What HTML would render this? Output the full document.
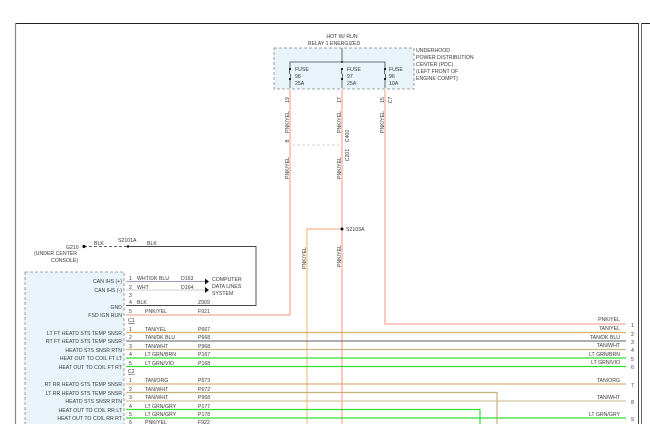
<!DOCTYPE html>
<html><head><style>
html,body{margin:0;padding:0;background:#fff;}
svg{display:block;font-family:"Liberation Sans",sans-serif;}
text{font-size:5.2px;fill:#3a3a3a;}
</style></head><body>
<svg width="650" height="424" viewBox="0 0 650 424" xmlns="http://www.w3.org/2000/svg">
<line x1="15" y1="23.5" x2="639" y2="23.5" stroke="#222" stroke-width="1"/>
<line x1="15.5" y1="23" x2="15.5" y2="424" stroke="#888" stroke-width="1.2"/>
<line x1="638.5" y1="23" x2="638.5" y2="424" stroke="#444" stroke-width="1"/>
<line x1="641.5" y1="23.5" x2="650" y2="23.5" stroke="#222" stroke-width="1"/>
<line x1="641.5" y1="23" x2="641.5" y2="424" stroke="#666" stroke-width="1"/>

<text x="342" y="38" text-anchor="middle">HOT W/ RUN</text>
<text x="334" y="45" text-anchor="middle">RELAY 1 ENERGIZED</text>
<rect x="274" y="48" width="140" height="41" fill="#e8f4fa" stroke="#888" stroke-dasharray="3,2" stroke-width="0.8"/>
<line x1="342" y1="48" x2="342" y2="62" stroke="#444" stroke-width="0.8"/>
<polyline points="290,70 290,62 385,62 385,70" fill="none" stroke="#444" stroke-width="0.8"/>
<circle cx="342" cy="62" r="1" fill="#222"/>
<g stroke="#333" stroke-width="0.7" fill="none">
<path d="M290,69 v1 q-1.5,2 0,4 q1.5,2 0,4 v10"/>
<path d="M342,69 v1 q-1.5,2 0,4 q1.5,2 0,4 v10"/>
<path d="M385,69 v1 q-1.5,2 0,4 q1.5,2 0,4 v10"/>
</g>
<g fill="#222"><rect x="289" y="68" width="2" height="2"/><rect x="289" y="78" width="2" height="2"/><rect x="341" y="68" width="2" height="2"/><rect x="341" y="78" width="2" height="2"/><rect x="384" y="68" width="2" height="2"/><rect x="384" y="78" width="2" height="2"/></g>
<text x="295" y="71">FUSE</text><text x="295" y="78">98</text><text x="295" y="85">25A</text>
<text x="347" y="71">FUSE</text><text x="347" y="78">97</text><text x="347" y="85">25A</text>
<text x="389" y="71">FUSE</text><text x="389" y="78">96</text><text x="389" y="85">10A</text>
<text x="416" y="52">UNDERHOOD</text>
<text x="416" y="59">POWER DISTRIBUTION</text>
<text x="416" y="66">CENTER (PDC)</text>
<text x="416" y="73">(LEFT FRONT OF</text>
<text x="416" y="80">ENGINE COMPT)</text>

<g fill="none" stroke="#f7ad9c" stroke-width="1.3">
<polyline points="290,90 290,315 126,315"/>
<polyline points="342,90 342,424"/>
<polyline points="385,90 385,324 626,324"/>
<polyline points="342,229 307,229 307,424" stroke="#f8b890"/>
</g>
<line x1="307" y1="230" x2="307" y2="424" stroke="#f5e48a" stroke-width="0.4"/>
<line x1="292" y1="145" x2="340" y2="145" stroke="#aaa" stroke-width="0.6" stroke-dasharray="3,2"/>
<circle cx="342" cy="229" r="1.5" fill="#111"/>
<text x="346" y="231">S2103A</text>
<g font-size="4.5">
<text transform="translate(289,100) rotate(-90)" text-anchor="middle">19</text>
<text transform="translate(341,100) rotate(-90)" text-anchor="middle">17</text>
<text transform="translate(384,100) rotate(-90)" text-anchor="middle">15</text>
<text transform="translate(392,100) rotate(-90)" text-anchor="middle">C7</text>
<text transform="translate(289,122) rotate(-90)" text-anchor="middle">PNK/YEL</text>
<text transform="translate(341,122) rotate(-90)" text-anchor="middle">PNK/YEL</text>
<text transform="translate(384,122) rotate(-90)" text-anchor="middle">PNK/YEL</text>
<text transform="translate(349,136) rotate(-90)" text-anchor="middle">C400</text>
<text transform="translate(349,155) rotate(-90)" text-anchor="middle">C201</text>
<text transform="translate(289,168) rotate(-90)" text-anchor="middle">PNK/YEL</text>
<text transform="translate(341,168) rotate(-90)" text-anchor="middle">PNK/YEL</text>
<text transform="translate(306,258) rotate(-90)" text-anchor="middle">PNK/YEL</text>
<text transform="translate(341,256) rotate(-90)" text-anchor="middle">PNK/YEL</text>
<text transform="translate(289,141) rotate(-90)" text-anchor="middle">8</text>
</g>

<line x1="84" y1="246.5" x2="128" y2="246.5" stroke="#333" stroke-width="0.8" stroke-dasharray="3,2"/>
<polyline points="128,246.5 256,246.5 256,305.5 126,305.5" fill="none" stroke="#444" stroke-width="0.9"/>
<circle cx="84" cy="246.5" r="1.6" fill="#111"/><circle cx="128" cy="246.5" r="1.2" fill="#111"/>
<text x="66" y="249">G210</text>
<text x="34" y="255">(UNDER CENTER</text>
<text x="51" y="262">CONSOLE)</text>
<text x="94" y="245">BLK</text><text x="118" y="242">S2101A</text><text x="147" y="245">BLK</text>

<rect x="25" y="272" width="99" height="160" fill="#e8f4fa" stroke="#888" stroke-dasharray="3,2" stroke-width="0.8"/>
<g text-anchor="end">
<text x="122" y="283">CAN IHS (+)</text>
<text x="122" y="292">CAN IHS (-)</text>
<text x="122" y="309">GND</text>
<text x="122" y="317">FSD IGN RUN</text>
<text x="122" y="335">LT FT HEATD STS TEMP SNSR</text>
<text x="122" y="343">RT FT HEATD STS TEMP SNSR</text>
<text x="122" y="352">HEATD STS SNSR RTN</text>
<text x="122" y="360">HEAT OUT TO COIL FT LT</text>
<text x="122" y="369">HEAT OUT TO COIL FT RT</text>
<text x="122" y="386">RT RR HEATD STS TEMP SNSR</text>
<text x="122" y="395">LT RR HEATD STS TEMP SNSR</text>
<text x="122" y="403">HEATD STS SNSR RTN</text>
<text x="122" y="412">HEAT OUT TO COIL RR LT</text>
<text x="122" y="420">HEAT OUT TO COIL RR RT</text>
</g>
<text x="128" y="322" text-decoration="underline">C1</text>
<text x="128" y="373" text-decoration="underline">C2</text>

<line x1="126" y1="281.5" x2="205" y2="281.5" stroke="#7080a8" stroke-width="0.8"/>
<line x1="126" y1="290" x2="205" y2="290" stroke="#bbb" stroke-width="0.8"/>
<path d="M205,278.5 l4,3 l-4,3z M205,287 l4,3 l-4,3z" fill="#111"/>
<text x="212" y="281">COMPUTER</text><text x="212" y="288">DATA LINES</text><text x="212" y="295">SYSTEM</text>
<text x="129" y="280">1</text><text x="137" y="280">WHT/DK BLU</text><text x="181" y="280">D163</text>
<text x="129" y="289">2</text><text x="137" y="289">WHT</text><text x="181" y="289">D164</text>
<text x="129" y="297">3</text>
<text x="129" y="304">4</text><text x="137" y="304">BLK</text><text x="198" y="304">Z909</text>
<text x="129" y="313">5</text><text x="145" y="313">PNK/YEL</text><text x="198" y="313">F921</text>

<g fill="none" stroke-width="1.2">
<line x1="126" y1="332.5" x2="626" y2="332.5" stroke="#d8b46a"/>
<line x1="126" y1="341" x2="626" y2="341" stroke="#7a7e8c"/>
<line x1="126" y1="349.5" x2="626" y2="349.5" stroke="#c9b48e"/>
<line x1="126" y1="358" x2="626" y2="358" stroke="#33dd33"/>
<line x1="126" y1="366.5" x2="626" y2="366.5" stroke="#33dd33"/>
<line x1="126" y1="384" x2="626" y2="384" stroke="#dbb47c"/>
<polyline points="126,392.5 497,392.5 497,424" stroke="#c7b07e"/>
<line x1="126" y1="401" x2="626" y2="401" stroke="#d4c29e"/>
<polyline points="126,409.5 480,409.5 480,424" stroke="#33dd33"/>
<line x1="126" y1="418" x2="626" y2="418" stroke="#33dd33"/>
</g>
<g>
<text x="129" y="331">1</text><text x="145" y="331">TAN/YEL</text><text x="198" y="331">P667</text>
<text x="129" y="339">2</text><text x="145" y="339">TAN/DK BLU</text><text x="198" y="339">P668</text>
<text x="129" y="348">3</text><text x="145" y="348">TAN/WHT</text><text x="198" y="348">P968</text>
<text x="129" y="356">4</text><text x="145" y="356">LT GRN/BRN</text><text x="198" y="356">P167</text>
<text x="129" y="365">5</text><text x="145" y="365">LT GRN/VIO</text><text x="198" y="365">P168</text>
<text x="129" y="382">1</text><text x="145" y="382">TAN/ORG</text><text x="198" y="382">P673</text>
<text x="129" y="391">2</text><text x="145" y="391">TAN/WHT</text><text x="198" y="391">P672</text>
<text x="129" y="399">3</text><text x="145" y="399">TAN/WHT</text><text x="198" y="399">P968</text>
<text x="129" y="408">4</text><text x="145" y="408">LT GRN/GRY</text><text x="198" y="408">P177</text>
<text x="129" y="416">5</text><text x="145" y="416">LT GRN/GRY</text><text x="198" y="416">P178</text>
<text x="129" y="424">6</text><text x="145" y="424">PNK/YEL</text><text x="198" y="424">F922</text>
</g>
<g text-anchor="end">
<text x="620" y="321">PNK/YEL</text>
<text x="620" y="330">TAN/YEL</text>
<text x="620" y="339">TAN/DK BLU</text>
<text x="620" y="347">TAN/WHT</text>
<text x="620" y="356">LT GRN/BRN</text>
<text x="620" y="364">LT GRN/VIO</text>
<text x="620" y="382">TAN/ORG</text>
<text x="620" y="399">TAN/WHT</text>
<text x="620" y="416">LT GRN/GRY</text>
</g>
<g font-size="4.5">
<text x="631" y="327">1</text><text x="631" y="336">2</text><text x="631" y="344">3</text>
<text x="631" y="352">4</text><text x="631" y="361">5</text><text x="631" y="369">6</text>
<text x="631" y="387">7</text><text x="631" y="404">8</text><text x="631" y="421">9</text>
</g>
</svg>
</body></html>
